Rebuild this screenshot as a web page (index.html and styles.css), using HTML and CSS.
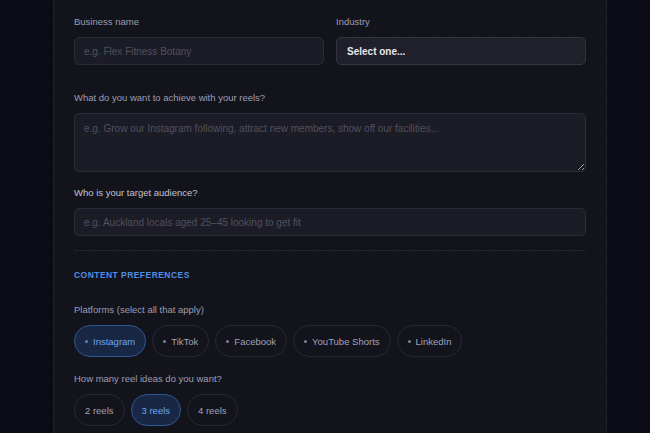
FILE: index.html
```html
<!DOCTYPE html>
<html lang="en">
<head>
<meta charset="utf-8">
<title>Reel ideas</title>
<link rel="stylesheet" href="styles.css">
</head>
<body>
<div class="page">
  <form class="card">
    <div class="row two">
      <div class="field">
        <label class="label">Business name</label>
        <input class="input" type="text" placeholder="e.g. Flex Fitness Botany">
      </div>
      <div class="field">
        <label class="label">Industry</label>
        <select class="input select">
          <option>Select one...</option>
        </select>
      </div>
    </div>
    <div class="field gap-a">
      <label class="label">What do you want to achieve with your reels?</label>
      <textarea class="input area" placeholder="e.g. Grow our Instagram following, attract new members, show off our facilities..."></textarea>
    </div>
    <div class="field gap-b">
      <label class="label bright">Who is your target audience?</label>
      <input class="input" type="text" placeholder="e.g. Auckland locals aged 25–45 looking to get fit">
    </div>
    <hr class="divider">
    <h3 class="section">CONTENT PREFERENCES</h3>
    <div class="field">
      <label class="label">Platforms (select all that apply)</label>
      <div class="pills">
        <span class="pill active"><span class="dot"></span>Instagram</span>
        <span class="pill"><span class="dot"></span>TikTok</span>
        <span class="pill"><span class="dot"></span>Facebook</span>
        <span class="pill"><span class="dot"></span>YouTube Shorts</span>
        <span class="pill"><span class="dot"></span>LinkedIn</span>
      </div>
    </div>
    <div class="field gap-c">
      <label class="label">How many reel ideas do you want?</label>
      <div class="pills">
        <span class="pill count">2 reels</span>
        <span class="pill count active">3 reels</span>
        <span class="pill count">4 reels</span>
      </div>
    </div>
  </form>
</div>
</body>
</html>
```
FILE: styles.css
```css
* { box-sizing: border-box; }
html, body { margin: 0; padding: 0; height: 100%; }
body {
  background-color: #0a0b15;
  background-image:
    linear-gradient(rgba(255,255,255,0.01) 1px, transparent 1px),
    linear-gradient(90deg, rgba(255,255,255,0.01) 1px, transparent 1px);
  background-size: 20px 20px;
  font-family: "Liberation Sans", Arial, sans-serif;
  overflow: hidden;
}
.page { padding-left: 53px; }
.card {
  width: 554px;
  height: 433px;
  background-color: #13131c;
  background-image:
    linear-gradient(90deg, rgba(255,255,255,0.01) 1px, transparent 1px);
  background-size: 20px 20px;
  border-left: 1px solid #20202b;
  border-right: 1px solid #20202b;
  padding: 15px 20px 0 20px;
  margin: 0;
}
.row.two {
  display: grid;
  grid-template-columns: 1fr 1fr;
  gap: 12px;
}
.field { display: flex; flex-direction: column; }
.label {
  font-size: 9.5px;
  line-height: 14px;
  color: #9d9db2;
  margin-bottom: 8px;
}
.label.bright { color: #c2c2d2; }
.input {
  display: block;
  width: 100%;
  height: 28px;
  background: #1c1c26;
  border: 1px solid #2b2b37;
  border-radius: 5px;
  color: #d8d8e2;
  font-family: "Liberation Sans", Arial, sans-serif;
  font-size: 10px;
  padding: 0 9px;
  outline: none;
  margin: 0;
}
.input::placeholder { color: #50505f; }
.select {
  appearance: none;
  -webkit-appearance: none;
  background: #20202a;
  border-color: #34343f;
  font-weight: bold;
  color: #e6e6ee;
  padding: 0 10px;
}
.area {
  height: 59px;
  padding: 9px 9px;
  line-height: 12px;
  resize: vertical;
}
.gap-a { margin-top: 26px; }
.gap-b { margin-top: 14px; }
.divider {
  border: 0;
  border-top: 1px solid #23232e;
  margin: 14px 0 0 0;
  height: 0;
}
.section {
  margin: 18px 0 22px 0;
  font-size: 8.5px;
  line-height: 12px;
  letter-spacing: 0.45px;
  font-weight: bold;
  color: #4f8fe0;
}
.pills { display: flex; gap: 6px; }
.pill {
  display: inline-flex;
  align-items: center;
  gap: 5px;
  height: 32px;
  padding: 0 10px;
  border: 1px solid #282834;
  border-radius: 16px;
  color: #a2a2b6;
  font-size: 9.5px;
}
.pill.count { padding: 0 10px; gap: 0; }
.pill .dot {
  width: 3px;
  height: 3px;
  border-radius: 50%;
  background: #80808f;
}
.pill.active {
  background: #182744;
  border-color: #2e5693;
  color: #6ea5f0;
}
.pill.active .dot { background: #4f84cf; }
.gap-c { margin-top: 15px; }
```
